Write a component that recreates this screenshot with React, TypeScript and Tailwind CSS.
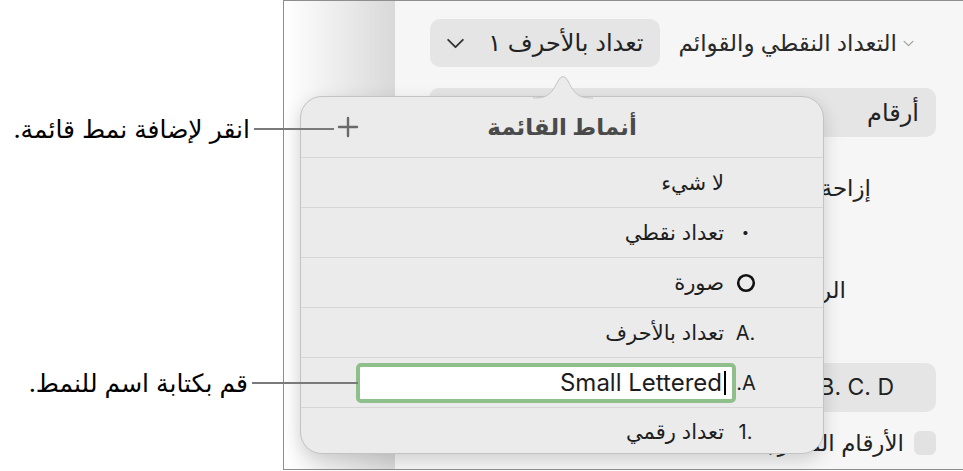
import React from "react";

const font = "font-['Inter','DejaVu_Sans',sans-serif]";

const Chevron = ({ className }: { className?: string }) => (
  <svg viewBox="0 0 20 12" className={className} fill="none" stroke="currentColor" strokeWidth={2} strokeLinecap="round" strokeLinejoin="round">
    <path d="M2 2l8 8 8-8" />
  </svg>
);

const Row = ({ marker, children, last }: { marker?: React.ReactNode; children: React.ReactNode; last?: boolean }) => (
  <div dir="rtl" className={`flex items-center gap-[11px] border-t border-[#d6d6d6] pr-[67px] ${last ? "h-[48px]" : "h-[50px]"}`}>
    <span dir="ltr" className="flex w-[21px] shrink-0 items-center justify-center text-[20px] text-[#1d1d1d]">
      {marker}
    </span>
    <span className="text-[21px] text-[#1d1d1d]">{children}</span>
  </div>
);

const ListStylesPopover = () => (
  <div className="absolute left-[300px] top-[96px] h-[358px] w-[524px] rounded-[22px] border border-[#c3c3c3] bg-[#ebebeb] shadow-[0_6px_18px_rgba(0,0,0,0.16)]">
    <svg className="absolute left-[232px] top-[-24px]" width="60" height="26" viewBox="0 0 60 26">
      <path d="M0 25 C14 25 18 22 25 8 Q30 -1 35 8 C42 22 46 25 60 25 L60 26 L0 26 Z" fill="#ebebeb" />
      <path d="M0 25 C14 25 18 22 25 8 Q30 -1 35 8 C42 22 46 25 60 25" fill="none" stroke="#c3c3c3" strokeWidth={1} />
    </svg>
    <div className="grid h-[60px] grid-cols-[1fr_auto_1fr] items-center">
      <div className="pl-[36px]">
        <svg width="22" height="22" viewBox="0 0 22 22" stroke="#6a6a6a" strokeWidth={2.4} strokeLinecap="round">
          <path d="M11 2v18M2 11h18" />
        </svg>
      </div>
      <span dir="rtl" className="text-[23px] font-bold text-[#4a4a4a]">أنماط القائمة</span>
      <div />
    </div>
    <Row>لا شيء</Row>
    <Row marker={<span className="text-[13px]">•</span>}>تعداد نقطي</Row>
    <Row
      marker={
        <svg width="20" height="20" viewBox="0 0 20 20">
          <circle cx="10" cy="10" r="7.8" fill="none" stroke="#111" strokeWidth={2.6} />
        </svg>
      }
    >
      صورة
    </Row>
    <Row marker="A.">تعداد بالأحرف</Row>
    <div dir="rtl" className="flex h-[50px] items-center border-t border-[#d6d6d6] pr-[67px]">
      <span className="flex w-[20px] shrink-0 justify-center text-[20px] text-[#1d1d1d]">A.</span>
      <div dir="ltr" className="flex h-[40px] w-[380px] items-center justify-end rounded-[5px] border-4 border-[#8fbf8a] bg-white pr-[6px]">
        <span className="text-[24px] leading-none text-[#1d1d1d]">Small Lettered</span>
        <span className="ml-[2px] h-[24px] w-[2px] bg-black" />
      </div>
    </div>
    <Row marker="1." last>
      تعداد رقمي
    </Row>
  </div>
);

export default function App() {
  return (
    <div className={`relative flex h-[471px] w-[963px] overflow-hidden bg-white ${font}`}>
      <div className="w-[283px] shrink-0" />
      <div className="flex h-[470px] flex-1 border-b border-l border-t border-[#8e8e8e]">
        <div className="w-[111px] shrink-0 bg-gradient-to-r from-white to-[#d9d9d9]" />
        <div dir="rtl" className="flex min-w-0 flex-1 flex-col bg-[#f6f6f6] pl-[34px] pr-[27px] text-[#222]">
          <div className="mt-[18px] flex h-[48px] items-center gap-[18px] pr-[22px]">
            <div className="flex shrink-0 items-center gap-[6px]">
              <Chevron className="h-[7px] w-[11px] text-[#9a9a9a]" />
              <span className="whitespace-nowrap text-[23px] font-medium text-[#2a2a2a]">التعداد النقطي والقوائم</span>
            </div>
            <div className="flex h-[48px] w-[230px] shrink-0 items-center justify-between rounded-[10px] bg-[#e5e5e5] pl-[16px] pr-[17px]">
              <span className="whitespace-nowrap text-[24px] text-[#222]">تعداد بالأحرف ١</span>
              <Chevron className="h-[11px] w-[19px] text-[#333]" />
            </div>
          </div>
          <div className="mt-[21px] flex h-[49px] items-center rounded-[10px] bg-[#e5e5e5] pr-[17px]">
            <span className="text-[24px]">أرقام</span>
          </div>
          <div className="mt-[26px] flex h-[50px] items-center pr-[65px]">
            <span className="text-[23px]">إزاحة</span>
          </div>
          <div className="mt-[52px] flex h-[50px] items-center pr-[90px]">
            <span className="text-[23px]">الرمز</span>
          </div>
          <div className="mt-[48px] flex h-[49px] items-center rounded-[10px] bg-[#e5e5e5] pr-[42px]">
            <span dir="ltr" className="text-[23px]">A. B. C. D</span>
          </div>
          <div className="mt-[18px] flex h-[26px] items-center gap-[10px]">
            <span className="h-[24px] w-[22px] shrink-0 rounded-[6px] bg-[#e2e2e2]" />
            <span className="whitespace-nowrap text-[23px]">الأرقام المتدرجة</span>
          </div>
        </div>
      </div>

      <ListStylesPopover />

      <div dir="rtl" className="absolute left-0 top-[111px] w-[250px] text-right text-[25px] text-black">
        انقر لإضافة نمط قائمة.
      </div>
      <div className="absolute left-[254px] top-[128px] h-[1.5px] w-[80px] bg-[#7a7a7a]" />

      <div dir="rtl" className="absolute left-0 top-[365px] w-[248px] text-right text-[25px] text-black">
        قم بكتابة اسم للنمط.
      </div>
      <div className="absolute left-[252px] top-[382px] h-[1.5px] w-[106px] bg-[#7a7a7a]" />
    </div>
  );
}
